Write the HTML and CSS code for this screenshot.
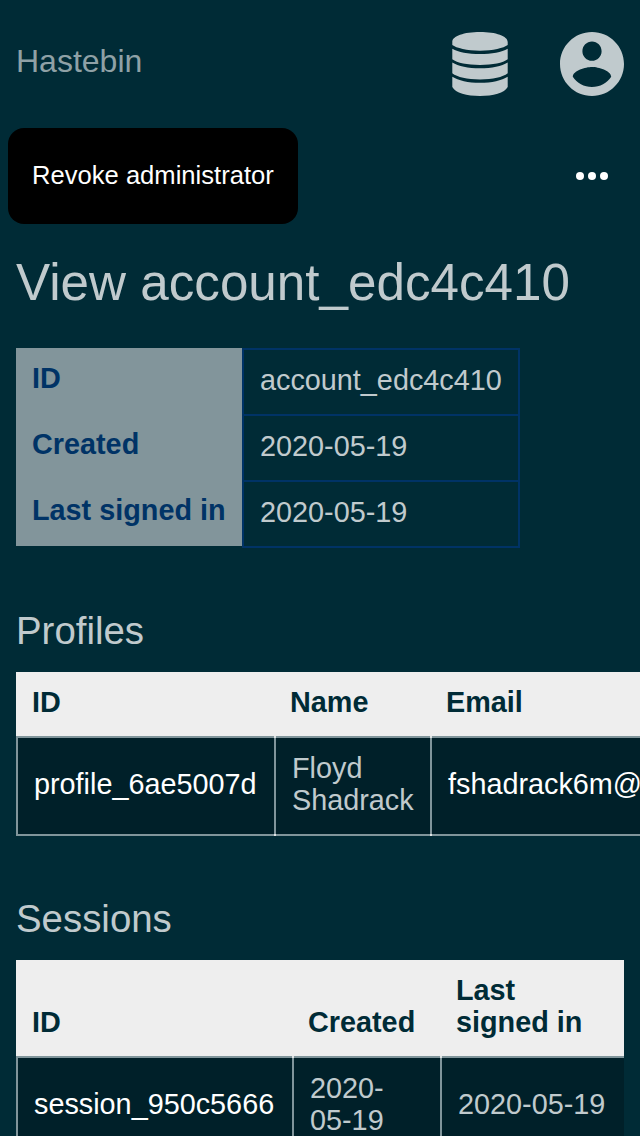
FILE: index.html
```html
<!DOCTYPE html>
<html lang="en">
<head>
<meta charset="utf-8">
<title>View account_edc4c410</title>
<link rel="stylesheet" href="styles.css">
</head>
<body>
<header class="topbar">
  <a class="brand">Hastebin</a>
  <nav class="topnav">
    <svg class="icon-db" viewBox="0 0 56 64"><path d="M.3 10C.3 4 12 0 28 0s27.700 4 27.700 10v3c-4 3-14.700 5.700-27.700 5.700S4.300 16 .3 13zM.3 16.700C6.300 20 16 22 28 22s21.700-2 27.700-5.300v10.600c-5 3.600-14.700 5.700-27.700 5.700S5.300 30.900.3 27.300zM.3 30.500c6 3.700 15.700 5.800 27.700 5.800s21.700-2.100 27.700-5.800v10.800c-5 3.900-14.700 6.200-27.700 6.200S5.300 45.200.3 41.300zM.3 44.700c6 3.800 15.700 6.100 27.700 6.100s21.700-2.300 27.700-6.100V55c-3 6-14.700 9-27.700 9S3.300 61 .3 55z"/></svg>
    <svg class="icon-user" viewBox="2 2 20 20"><path d="M12 2C6.480 2 2 6.480 2 12s4.480 10 10 10 10-4.480 10-10S17.520 2 12 2zm0 3c1.660 0 3 1.340 3 3s-1.340 3-3 3-3-1.340-3-3 1.340-3 3-3zm0 14.200c-2.500 0-4.710-1.280-6-3.220.03-1.990 4-3.080 6-3.080 1.990 0 5.970 1.090 6 3.080-1.290 1.940-3.500 3.220-6 3.220z"/></svg>
  </nav>
</header>
<div class="actions">
  <a class="button">Revoke administrator</a>
  <svg class="icon-more" viewBox="0 0 32 8"><circle cx="4" cy="4" r="4"/><circle cx="16" cy="4" r="4"/><circle cx="28" cy="4" r="4"/></svg>
</div>
<main>
  <h1>View account_edc4c410</h1>
  <dl class="details">
    <dt>ID</dt><dd>account_edc4c410</dd>
    <dt>Created</dt><dd>2020-05-19</dd>
    <dt>Last signed in</dt><dd>2020-05-19</dd>
  </dl>
  <h2>Profiles</h2>
  <div class="table profiles">
    <div class="th">ID</div><div class="th">Name</div><div class="th">Email</div>
    <div class="td link">profile_6ae5007d</div><div class="td"><span>Floyd<br>Shadrack</span></div><div class="td link">fshadrack6m@</div>
  </div>
  <h2>Sessions</h2>
  <div class="table sessions">
    <div class="th">ID</div><div class="th">Created</div><div class="th">Last<br>signed in</div>
    <div class="td link">session_950c5666</div><div class="td"><span>2020-<br>05-19</span></div><div class="td">2020-05-19</div>
  </div>
</main>
</body>
</html>
```
FILE: styles.css
```css
* { box-sizing: border-box; }
html { height: 100%; overflow: hidden; }
body {
  margin: 0;
  height: 100%;
  overflow: hidden;
  background: #002b36;
  color: #c0cacd;
  font: 28.8px/32px "Liberation Sans", Arial, sans-serif;
}
svg { display: block; }
.topbar {
  display: flex;
  justify-content: space-between;
  height: 128px;
  padding: 32px 16px 0;
}
.brand { font-size: 32px; line-height: 36px; padding-top: 11px; color: #8fa1a6; }
.topnav { display: flex; gap: 52px; fill: #c0cacd; }
.icon-db { width: 56px; height: 64px; }
.icon-user { width: 64px; height: 64px; }
.actions {
  display: flex;
  justify-content: space-between;
  align-items: center;
  height: 96px;
  padding: 0 32px 0 8px;
}
.button {
  width: 290px;
  height: 96px;
  padding-left: 24px;
  border-radius: 16px;
  background: #000;
  color: #fff;
  font-size: 25.6px;
  line-height: 94px;
  white-space: nowrap;
}
.icon-more { width: 32px; height: 8px; fill: #fff; }
main { padding: 0 16px; }
h1, h2 { margin: 0; font-weight: 400; white-space: nowrap; }
h1 { height: 124px; padding-top: 31px; font-size: 51.2px; line-height: 56px; }
h2 { height: 124px; padding-top: 61px; font-size: 38.4px; line-height: 44px; }
.details {
  display: grid;
  grid-template-columns: 226px 278px;
  grid-auto-rows: 66px;
  margin: 0;
  padding-bottom: 2px;
}
.details dt {
  padding: 14px 16px;
  background: #82959b;
  color: #003366;
  font-weight: 700;
}
.details dd {
  height: 68px;
  margin: 0;
  padding: 14px 16px;
  border: 2px solid #003366;
}
.table { display: grid; }
.profiles { grid-template-columns: 258px 156px 1fr; grid-template-rows: 66px 98px; margin-right: -16px; }
.sessions { grid-template-columns: 276px 148px 184px; grid-template-rows: 98px 98px; }
.th {
  display: flex;
  align-items: flex-end;
  padding: 14px 16px 18px;
  border-bottom: 2px solid #80959b;
  background: #eee;
  color: #002b36;
  font-weight: 700;
}
.td {
  position: relative;
  display: flex;
  align-items: center;
  min-width: 0;
  padding: 14px 16px 18px;
  border: solid #80959b;
  border-width: 0 0 2px 2px;
  background: #002029;
  white-space: nowrap;
}
/* lighter joints where column and row rules cross */
.td + .td::before,
.td + .td::after {
  content: "";
  position: absolute;
  left: -2px;
  width: 2px;
  height: 2px;
  background: #dfe4e5;
}
.td + .td::before { top: -2px; }
.td + .td::after { bottom: -2px; }
.link { color: #fff; }
```
